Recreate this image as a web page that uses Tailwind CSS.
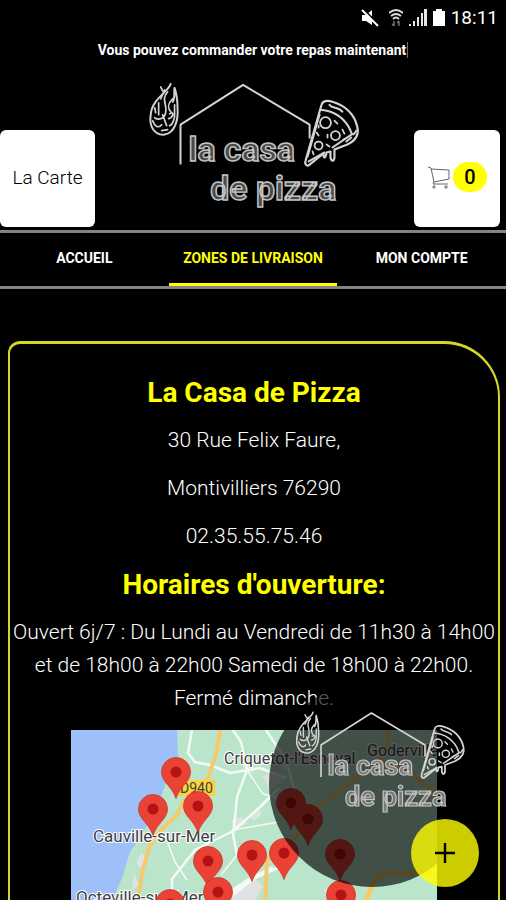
<!DOCTYPE html>
<html lang="fr">
<head>
    <meta charset="UTF-8">
    <meta name="viewport" content="width=device-width, initial-scale=1.0">
    <title>La Casa de Pizza</title>
    <script src="https://cdn.jsdelivr.net/npm/@tailwindcss/browser@4"></script>
</head>
<body class="h-screen overflow-hidden bg-black text-white font-['Roboto',sans-serif]">

    <!-- shared shapes -->
    <svg class="hidden">
        <symbol id="logo-art" viewBox="0 0 230 145">
            <g fill="none" stroke="#d4d4d4" stroke-linecap="round" stroke-linejoin="round">
                <path stroke-width="2" stroke-linecap="butt" d="M40 90V50L103 10L170 50V64"/>
                <!-- flame -->
                <path stroke-width="2" d="M30 9C29 16 11 24 10 40C8 52 14 61 24 60C34 58 38 46 37 33C37 26 36 19 34 13C33 19 35 23 32 27"/>
                <path stroke-width="1.7" d="M20 12L22 16M24 15L20 24M27 17C20 24 27 30 25 38C24 44 18 46 14 43M32 24C26 30 27 34 31 38M14 33L15 38M18 28L18 40M22 40L26 51M29 39C34 36 33 43 28 44M34 30L34 42C33 47 32 50 29 51M12 46C14 52 18 54 21 50M21 56L27 55"/>
                <!-- slice of pizza -->
                <path stroke-width="2.2" d="M182 30C183 26 188 25 193 27C206 31 215 40 218 52C220 60 216 66 208 70L195 75V82C195 87 192 88 191 83V77L187 78C186 84 184 85 184 79L169 91C166 92 165 89 166 86Z"/>
                <path stroke-width="2" d="M181 35C195 36 207 44 212 58C213 61 215 60 217 56M190 30C193 34 199 32 203 37M212 60L193 73M180 40L168 82M185 78L169 87M207 67L212 63"/>
                <circle cx="186" cy="48" r="5.5" stroke-width="1.8"/>
                <circle cx="196" cy="61" r="4.5" stroke-width="1.8"/>
                <circle cx="179" cy="71" r="4" stroke-width="1.8"/>
                <path stroke-width="1.8" d="M195 46l3 3M203 55l2 4M188 60v3M177 58l2 3M173 77l1 3M187 70l3 2M204 65l2-1M179 51v2"/>
            </g>
        </symbol>
        <symbol id="pin" viewBox="0 0 30 42" overflow="visible">
            <path fill="#ea4335" stroke="#c5372c" stroke-width=".8" d="M15 .5A14.5 14.5 0 0 0 .5 15C.5 25 11 29 15 41.5C19 29 29.5 25 29.5 15A14.5 14.5 0 0 0 15 .5Z"/>
            <circle cx="15" cy="15" r="5.5" fill="#b31412"/>
        </symbol>
    </svg>

    <!-- status bar -->
    <div class="flex h-9 items-center justify-end gap-1.5 pr-2">
        <svg class="mr-1 h-[18px] w-[18px]" viewBox="0 0 18 18" fill="#fff">
            <path d="M1 6h4l6-5v15l-6-4H1z"/>
            <path stroke="#000" stroke-width="2" d="M2 0L18 16"/>
            <path stroke="#fff" stroke-width="2" d="M1 1L17 17"/>
        </svg>
        <svg class="h-[18px] w-3.5" viewBox="0 0 14 18" fill="none" stroke="#ddd" stroke-width="1.8">
            <path d="M0 4Q7-2 14 4M2 7Q7 3 12 7M4 10Q7 7 10 10"/>
            <path stroke="#777" stroke-width="1.4" d="M5 12v5M3 15l2 2M10 17v-5M8 14l2-2"/>
        </svg>
        <svg class="h-[18px] w-[18px]" viewBox="0 0 18 18" fill="#e5e5e5">
            <path d="M0 15h2v2H0zM4 12h2v5H4zM8 8h2v9H8zM12 4h2v13h-2zM15 0h3v17h-3z"/>
        </svg>
        <svg class="h-[18px] w-3" viewBox="0 0 12 18" fill="#fff">
            <path d="M3 0h6v2h3v15H0V2h3z"/>
        </svg>
        <span class="text-[19px] leading-5">18:11</span>
    </div>

    <p class="flex h-7 items-center justify-center text-sm font-bold">
        Vous pouvez commander votre repas maintenant<span class="ml-px h-4 w-px bg-gray-500"></span>
    </p>

    <!-- header -->
    <header class="flex items-end justify-between pt-[11px] pr-1.5">
        <a href="#carte" class="flex h-[97px] w-[95px] items-center justify-center rounded-md bg-white text-[19px] font-light text-black">La Carte</a>
        <svg class="mb-2 h-36 w-[230px] overflow-visible" viewBox="0 0 230 145" role="img" aria-label="La Casa de Pizza">
            <use href="#logo-art"/>
            <g class="font-['Roboto',sans-serif] font-bold" fill="#4a4a4a" stroke="#c4c4c4" stroke-width="1.5" font-size="34">
                <text x="48" y="87">la casa</text>
                <text x="70" y="126">de pizza</text>
            </g>
        </svg>
        <a href="#panier" class="flex h-[97px] w-[86px] items-center justify-center gap-0.5 rounded-md bg-white pb-1">
            <svg class="h-6 w-6" viewBox="0 0 24 24" fill="none" stroke="#666" stroke-width="1">
                <path d="M1 2l3 1l3 14l15-3V5L4 4M7 17l-1 2h15"/>
                <circle cx="7" cy="22" r="1.2"/>
                <circle cx="19" cy="22" r="1.2"/>
            </svg>
            <span class="flex h-[30px] w-[34px] items-center justify-center rounded-full bg-[#ff0] text-xl font-medium text-black">0</span>
        </a>
    </header>

    <nav class="mt-[3px] grid h-[59px] grid-cols-3 border-y-3 border-[#858585] text-center text-sm font-bold">
        <a href="#accueil" class="flex items-center justify-center pb-1">ACCUEIL</a>
        <a href="#zones" class="flex items-center justify-center border-b-3 border-[#ff0] pb-px text-[#ff0]">ZONES DE LIVRAISON</a>
        <a href="#compte" class="flex items-center justify-center pb-1">MON COMPTE</a>
    </nav>

    <!-- delivery zone card -->
    <main class="mt-[52px] mr-1.5 ml-2 rounded-tl-xl rounded-tr-[56px] border-2 border-t-3 border-b-0 border-[#d6d62a] pt-8 text-center text-[21px] leading-[33px] font-light">
        <h1 class="mb-[15px] text-[28px] font-bold text-[#ff0]">La Casa de Pizza</h1>
        <p class="mb-[15px]">30 Rue Felix Faure,</p>
        <p class="mb-[15px]">Montivilliers 76290</p>
        <p class="mb-[15px]">02.35.55.75.46</p>
        <h2 class="mb-[15px] text-[28px] font-bold text-[#ff0]">Horaires d'ouverture:</h2>
        <p class="mb-[15px]">Ouvert 6j/7 : Du Lundi au Vendredi de 11h30 à 14h00 et de 18h00 à 22h00 Samedi de 18h00 à 22h00. Fermé dimanche.</p>

        <svg class="mx-auto w-3/4" viewBox="0 0 366 300" role="img" aria-label="Carte des zones de livraison">
            <rect width="366" height="300" fill="#bbe5cb"/>
            <path fill="#9dc0fa" d="M0 0H106L107 25L111 32L96 50L86 78L69 108L59 122L51 148L39 175V300H0Z"/>
            <!-- towns -->
            <g fill="#dfe3e3">
                <path d="M160 90l12-3l4 7l-12 5zM192 46l14-4l5 10l-12 8zM178 84l9-6l4 6l-9 7zM71 122l4 8l-5 9l-5-6zM63 143l5 12l-7 5zM158 160l22-14l12 10l-8 14h-24zM253 160l14-6l6 14h-16zM208 30l10 4l-4 9zM172 35l9-2l3 8l-8 3z"/>
            </g>
            <!-- minor roads -->
            <g fill="none" stroke="#f4faf6" stroke-width="2.5" stroke-linejoin="round">
                <path d="M121 0L117 23L124 32L139 35L159 43L189 38L215 48"/>
                <path d="M162 0L170 12L176 40L166 67L164 88L162 104L166 125"/>
                <path d="M208 58L189 77L162 101L124 120L101 149V170"/>
                <path stroke-width="1.5" d="M176 40L192 64L215 70M95 108L104 132L116 150M166 125L150 145M162 100L208 92"/>
                <path d="M155 170L184 148L215 134M195 0L215 30L225 66"/>
                <path stroke-width="4" d="M146 172L178 150L202 138"/>
            </g>
            <g fill="none" stroke="#c9d6d2" stroke-width="1.5" stroke-linejoin="round">
                <path d="M366 95Q350 82 328 88Q312 100 288 106L270 106L245 125M311 40V143M235 0L228 22Q230 45 246 60M290 0L284 22L262 40M250 140L300 120Q340 130 366 120M240 118V132L262 140"/>
            </g>
            <!-- main roads -->
            <g fill="none" stroke="#f5ca6d" stroke-width="4" stroke-linejoin="round">
                <path d="M149 0L146 20L138 46L126 61L113 71L106 85L90 100L79 115L71 143L66 175"/>
                <path d="M317 0V14L309 33L279 53L246 77L232 98L214 118L196 130L194 175M312 33L332 40L350 50L366 68"/>
                <path stroke-width="5" d="M293 175L302 153Q307 143 318 143H366"/>
            </g>
            <rect x="107" y="50" width="37" height="16" rx="1" fill="#fdd13a"/>
            <g class="font-normal" fill="#3c4043" stroke="#fff" stroke-width="2" paint-order="stroke" font-size="17">
                <text x="109" y="63" font-size="14" stroke="none">D940</text>
                <text x="153" y="34" font-size="16">Criquetot-l'Esneval</text>
                <text x="296" y="26" font-size="16">Goderville</text>
                <text x="22" y="112">Cauville-sur-Mer</text>
                <text x="5" y="173">Octeville-sur-Mer</text>
            </g>
            <g>
                <use href="#pin" x="90" y="27" width="30" height="42"/>
                <use href="#pin" x="67" y="64" width="30" height="42"/>
                <use href="#pin" x="112" y="61" width="30" height="42"/>
                <use href="#pin" x="122" y="116" width="30" height="42"/>
                <use href="#pin" x="166" y="110" width="30" height="42"/>
                <use href="#pin" x="132" y="147" width="30" height="42"/>
                <use href="#pin" x="84" y="159" width="30" height="42"/>
                <use href="#pin" x="205" y="58" width="30" height="42"/>
                <use href="#pin" x="222" y="74" width="30" height="42"/>
                <use href="#pin" x="198" y="108" width="30" height="42"/>
                <use href="#pin" x="254" y="109" width="30" height="42"/>
                <use href="#pin" x="255" y="150" width="30" height="42"/>
            </g>
        </svg>
    </main>

    <!-- floating logo and button -->
    <div class="fixed right-[31px] bottom-[13px] h-[206px] w-[206px] rounded-full bg-black/65">
        <svg class="absolute top-6 left-5 h-[116px] w-[184px] overflow-visible" viewBox="0 0 230 145" role="img" aria-label="La Casa de Pizza">
            <use href="#logo-art"/>
            <g class="font-['Roboto',sans-serif] font-bold" fill="#777" stroke="#c4c4c4" stroke-width="1.5" font-size="34">
                <text x="48" y="87">la casa</text>
                <text x="70" y="126">de pizza</text>
            </g>
        </svg>
    </div>
    <button type="button" aria-label="Ouvrir le menu" class="fixed right-[27px] bottom-[13px] flex h-[68px] w-[68px] items-center justify-center rounded-full bg-[#ff0]/80">
        <svg class="h-5 w-5" viewBox="0 0 20 20" stroke="#000" stroke-width="2.4">
            <path d="M10 0V20M0 10H20"/>
        </svg>
    </button>

</body>
</html>
